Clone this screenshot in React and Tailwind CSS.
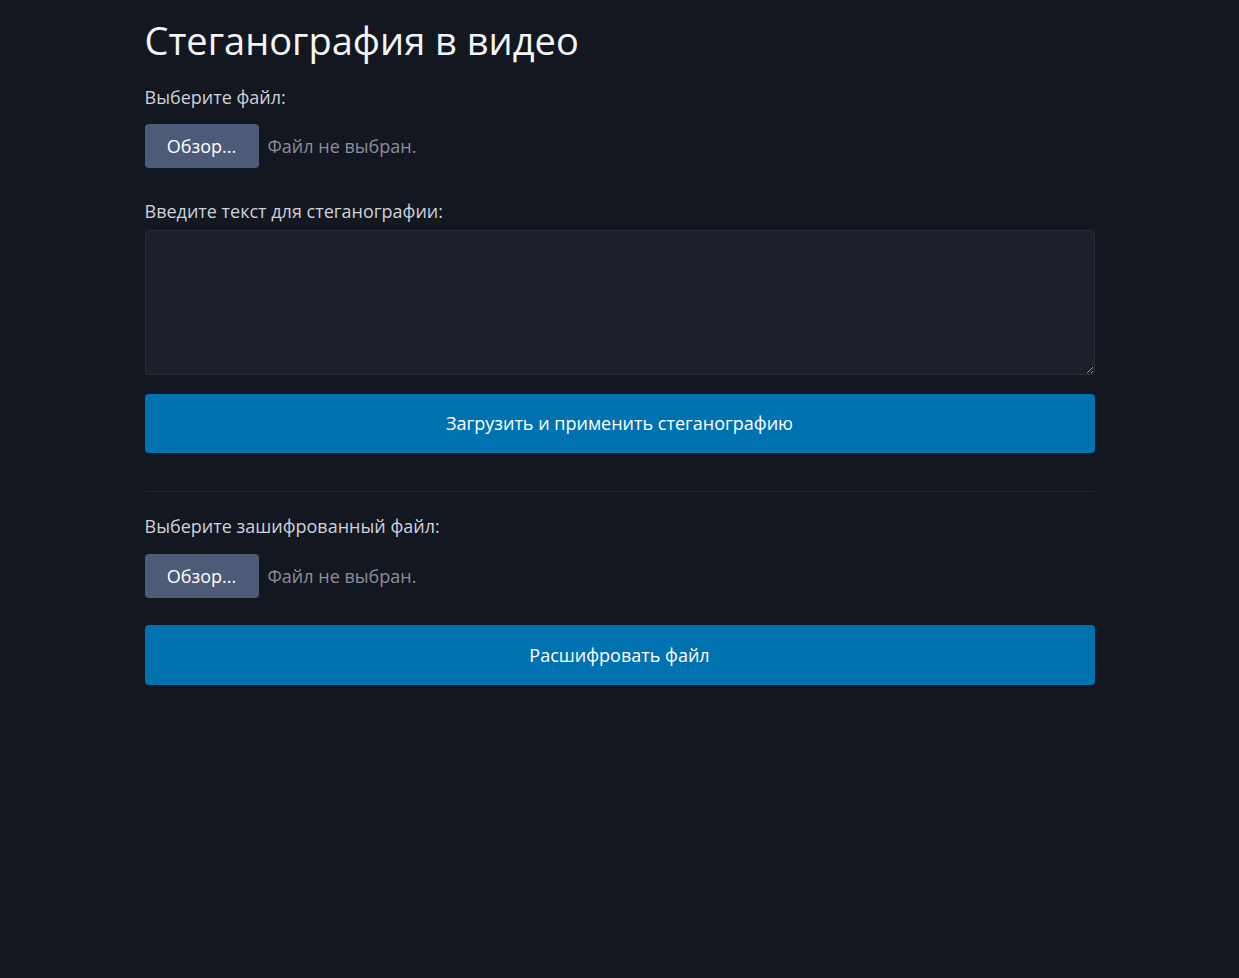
import { useState } from "react";

const FilePicker = ({ id }) => {
    const [name, setName] = useState("");
    return (
        <label htmlFor={id} className="flex items-center gap-[9px] cursor-pointer">
            <span className="h-[44px] w-[114px] flex items-center justify-center rounded-[4px] bg-[#4d5a78] text-[18px] font-medium text-white">
                Обзор...
            </span>
            <span className="text-[18px] text-[#8a8e9b]">{name || "Файл не выбран."}</span>
            <input
                id={id}
                type="file"
                className="hidden"
                onChange={(e) => setName(e.target.files?.[0]?.name || "")}
            />
        </label>
    );
};

const App = () => {
    const [text, setText] = useState("");

    return (
        <div className="min-h-screen bg-[#131720] font-['Open_Sans','Noto_Sans',sans-serif]">
            <div className="mx-auto w-[950px] pt-[16px]">
                <h1 className="text-[38px] leading-[48px] text-[#f3f4f6]">Стеганография в видео</h1>

                <div className="mt-[21px] text-[18px] leading-[24px] text-[#ced2da]">Выберите файл:</div>
                <div className="mt-[15px]">
                    <FilePicker id="file-encode" />
                </div>

                <div className="mt-[31px] text-[18px] leading-[24px] text-[#ced2da]">Введите текст для стеганографии:</div>
                <textarea
                    value={text}
                    onChange={(e) => setText(e.target.value)}
                    className="mt-[7px] block h-[145px] w-full rounded-[4px] border border-[#2b2e3a] bg-[#1d202b] p-2 text-[#e5e7eb] outline-none"
                />

                <button className="mt-[19px] h-[59px] w-full rounded-[4px] bg-[#0072b0] text-[18px] font-medium text-white">
                    Загрузить и применить стеганографию
                </button>

                <hr className="mt-[38px] border-t border-[#242835]" />

                <div className="mt-[22px] text-[18px] leading-[24px] text-[#ced2da]">Выберите зашифрованный файл:</div>
                <div className="mt-[16px]">
                    <FilePicker id="file-decode" />
                </div>

                <button className="mt-[27px] h-[60px] w-full rounded-[4px] bg-[#0072b0] text-[18px] font-medium text-white">
                    Расшифровать файл
                </button>
            </div>
        </div>
    );
};

export default App;
